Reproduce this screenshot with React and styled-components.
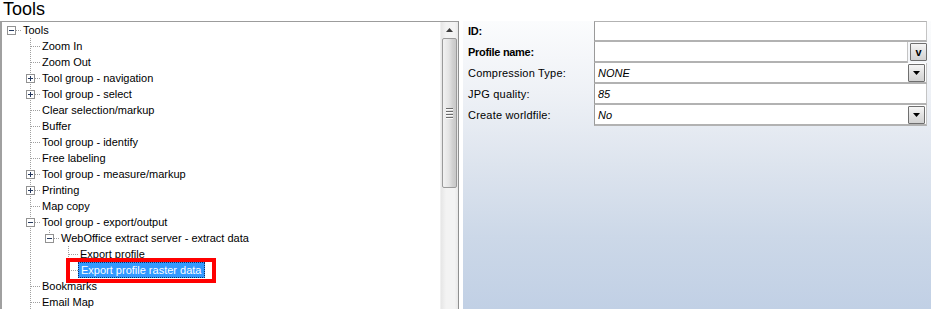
import React from 'react';
import styled, { createGlobalStyle } from 'styled-components';

const GlobalStyle = createGlobalStyle`
	html, body {
		margin: 0;
		padding: 0;
		background: #ffffff;
		overflow: hidden;
	}
	body {
		font-family: 'Liberation Sans', Arial, sans-serif;
		font-size: 11px;
		color: #000000;
	}
`;

const Page = styled.div`
	width: 931px;
	height: 309px;
	display: flex;
	flex-direction: column;
	overflow: hidden;
`;

const Title = styled.div`
	height: 21px;
	padding-left: 3px;
	font-size: 18px;
	line-height: 19px;
	color: #000;
`;

const Main = styled.div`
	flex: 1;
	display: flex;
	min-height: 0;
`;

const TreePanel = styled.div`
	width: 456px;
	display: flex;
	border-top: 1px solid #9c9c9c;
	border-left: 2px solid #a0a0a0;
	border-right: 1px solid #8e8f8f;
	overflow: hidden;
`;

const TreeList = styled.div`
	flex: 1;
	display: flex;
	flex-direction: column;
`;

const Row = styled.div`
	height: 16px;
	display: flex;
	align-items: center;
	flex-shrink: 0;
`;

const Label = styled.span`
	position: relative;
	display: inline-block;
	height: 14px;
	line-height: 14px;
	padding: 0 ${props => props.selected ? '3px 0 2px' : '1px'};
	white-space: nowrap;
	border: 1px ${props => props.selected ? 'dotted #0c2f66' : 'solid transparent'};
	background: ${props => props.selected ? '#3399ff' : 'transparent'};
	color: ${props => props.selected ? '#ffffff' : '#000000'};

	${props => props.marked ? `
		&::after {
			content: '';
			position: absolute;
			left: -13px;
			right: -12px;
			top: -5px;
			bottom: -6px;
			border: 4px solid #ff0000;
		}
	` : ''}
`;

const Cell = styled.svg`
	display: block;
	flex-shrink: 0;
`;

const Scrollbar = styled.div`
	width: 17px;
	display: flex;
	flex-direction: column;
	background: linear-gradient(to right, #e6e6e6, #f3f3f3 30%, #f3f3f3 80%, #e8e8e8);
	border-left: 1px solid #f0f0f0;
`;

const ArrowButton = styled.div`
	height: 16px;
	display: flex;
	align-items: center;
	justify-content: center;
`;

const Thumb = styled.div`
	height: 148px;
	margin: 0 1px 0 1px;
	border: 1px solid #9a9a9a;
	border-radius: 2px;
	background: linear-gradient(to right, #f2f2f2, #e4e4e4 45%, #d0d0d0 75%, #c8c8c8);
	display: flex;
	align-items: center;
	justify-content: center;
`;

const Gripper = styled.div`
	width: 7px;
	display: flex;
	flex-direction: column;
	gap: 1px;

	span {
		display: block;
		height: 1px;
		background: #6c6c6c;
		box-shadow: 0 1px 0 #fafafa;
		margin-bottom: 1px;
	}
`;

const Gap = styled.div`
	width: 4px;
	background: #ffffff;
`;

const PropPanel = styled.div`
	flex: 1;
	padding: 0 4px 0 5px;
	background: linear-gradient(to bottom, #fbfcfd 0%, #eef1f6 25%, #dde4ee 50%, #ccd8e8 75%, #c1d0e5 100%);
`;

const PropRow = styled.div`
	display: flex;
	height: 21px;
	box-sizing: border-box;
`;

const PropName = styled.div`
	width: 126px;
	line-height: 21px;
	font-weight: ${props => props.bold ? 'bold' : 'normal'};
	letter-spacing: ${props => props.bold ? '-0.3px' : '0.2px'};
	white-space: nowrap;
`;

const Field = styled.div`
	flex: 1;
	display: flex;
	align-items: center;
	box-sizing: border-box;
	background: #ffffff;
	border-left: 1px solid #9a9a9a;
	border-right: 1px solid #c4c4c4;
	border-bottom: 2px solid #b2b2b2;
	border-top: ${props => props.first ? '1px solid #b2b2b2' : 'none'};
`;

const Value = styled.div`
	flex: 1;
	padding-left: 3px;
	font-style: italic;
	white-space: nowrap;
`;

const DropButton = styled.div`
	width: 15px;
	height: 16px;
	margin-right: ${props => props.outside ? '0' : '1px'};
	margin-left: ${props => props.outside ? '2px' : '0'};
	align-self: ${props => props.outside ? 'flex-start' : 'center'};
	margin-top: ${props => props.outside ? '1px' : '0'};
	border: 1px solid #6f6f6f;
	border-radius: 1px;
	background: linear-gradient(to bottom, #f6f6f6, #e2e2e2 50%, #d2d2d2);
	display: flex;
	align-items: center;
	justify-content: center;
	font-weight: bold;
	font-size: 11px;
	line-height: 1;
	flex-shrink: 0;
`;

const rows = [
	{ label: 'Tools', level: 0, toggle: 'minus', root: true },
	{ label: 'Zoom In', level: 1 },
	{ label: 'Zoom Out', level: 1 },
	{ label: 'Tool group - navigation', level: 1, toggle: 'plus' },
	{ label: 'Tool group - select', level: 1, toggle: 'plus' },
	{ label: 'Clear selection/markup', level: 1 },
	{ label: 'Buffer', level: 1 },
	{ label: 'Tool group - identify', level: 1 },
	{ label: 'Free labeling', level: 1 },
	{ label: 'Tool group - measure/markup', level: 1, toggle: 'plus' },
	{ label: 'Printing', level: 1, toggle: 'plus' },
	{ label: 'Map copy', level: 1 },
	{ label: 'Tool group - export/output', level: 1, toggle: 'minus' },
	{ label: 'WebOffice extract server - extract data', level: 2, toggle: 'minus', last: true, guides: [false, true] },
	{ label: 'Export profile', level: 3, guides: [false, true, false] },
	{ label: 'Export profile raster data', level: 3, last: true, selected: true, guides: [false, true, false] },
	{ label: 'Bookmarks', level: 1 },
	{ label: 'Email Map', level: 1 },
];

const DOT = '#a0a0a0';

const Guide = ({ line }) => (
	<Cell width="19" height="16" viewBox="0 0 19 16" shapeRendering="crispEdges">
		{line && <line x1="9.5" y1="0" x2="9.5" y2="16" stroke={DOT} strokeDasharray="1 1" />}
	</Cell>
);

const Connector = ({ toggle, last, root }) => (
	<Cell width="19" height="16" viewBox="0 0 19 16" shapeRendering="crispEdges">
		{!root && <line x1="9.5" y1="0" x2="9.5" y2={last ? 9 : 16} stroke={DOT} strokeDasharray="1 1" />}
		<line x1="10" y1="8.5" x2="19" y2="8.5" stroke={DOT} strokeDasharray="1 1" />
		{toggle && (
			<g>
				<rect x="5.5" y="4.5" width="8" height="8" fill="#ffffff" stroke="#929292" />
				<line x1="7" y1="8.5" x2="12" y2="8.5" stroke="#24385e" />
				{toggle === 'plus' && <line x1="9.5" y1="6" x2="9.5" y2="11" stroke="#24385e" />}
			</g>
		)}
	</Cell>
);

const TreeRow = ({ label, level, toggle, last, root, selected, guides }) => {
	const cols = guides || Array.from({ length: level }, (_, i) => i > 0);
	return (
		<Row>
			{cols.map((line, i) => <Guide key={i} line={line} />)}
			<Connector toggle={toggle} last={last} root={root} />
			<Label selected={selected} marked={selected}>{label}</Label>
		</Row>
	);
};

const UpArrow = () => (
	<svg width="7" height="4" viewBox="0 0 7 4">
		<path d="M3.5 0 L7 4 L0 4 Z" fill="#3c3c3c" />
	</svg>
);

const DownArrow = () => (
	<svg width="7" height="4" viewBox="0 0 7 4">
		<path d="M0 0 L7 0 L3.5 4 Z" fill="#000000" />
	</svg>
);

const properties = [
	{ name: 'ID:', bold: true },
	{ name: 'Profile name:', bold: true, button: 'outside' },
	{ name: 'Compression Type:', value: 'NONE', button: 'inside' },
	{ name: 'JPG quality:', value: '85' },
	{ name: 'Create worldfile:', value: 'No', button: 'inside' },
];

export default function App() {
	return (
		<Page>
			<GlobalStyle />
			<Title>Tools</Title>
			<Main>
				<TreePanel>
					<TreeList>
						{rows.map(row => <TreeRow key={row.label} {...row} />)}
					</TreeList>
					<Scrollbar>
						<ArrowButton><UpArrow /></ArrowButton>
						<Thumb>
							<Gripper><span /><span /><span /><span /></Gripper>
						</Thumb>
					</Scrollbar>
				</TreePanel>
				<Gap />
				<PropPanel>
					{properties.map((p, i) => (
						<PropRow key={p.name}>
							<PropName bold={p.bold}>{p.name}</PropName>
							{p.button === 'outside' ? (
								<>
									<Field first={i === 0}><Value /></Field>
									<DropButton outside>v</DropButton>
								</>
							) : (
								<Field first={i === 0}>
									<Value>{p.value}</Value>
									{p.button === 'inside' && <DropButton><DownArrow /></DropButton>}
								</Field>
							)}
						</PropRow>
					))}
				</PropPanel>
			</Main>
		</Page>
	);
}
